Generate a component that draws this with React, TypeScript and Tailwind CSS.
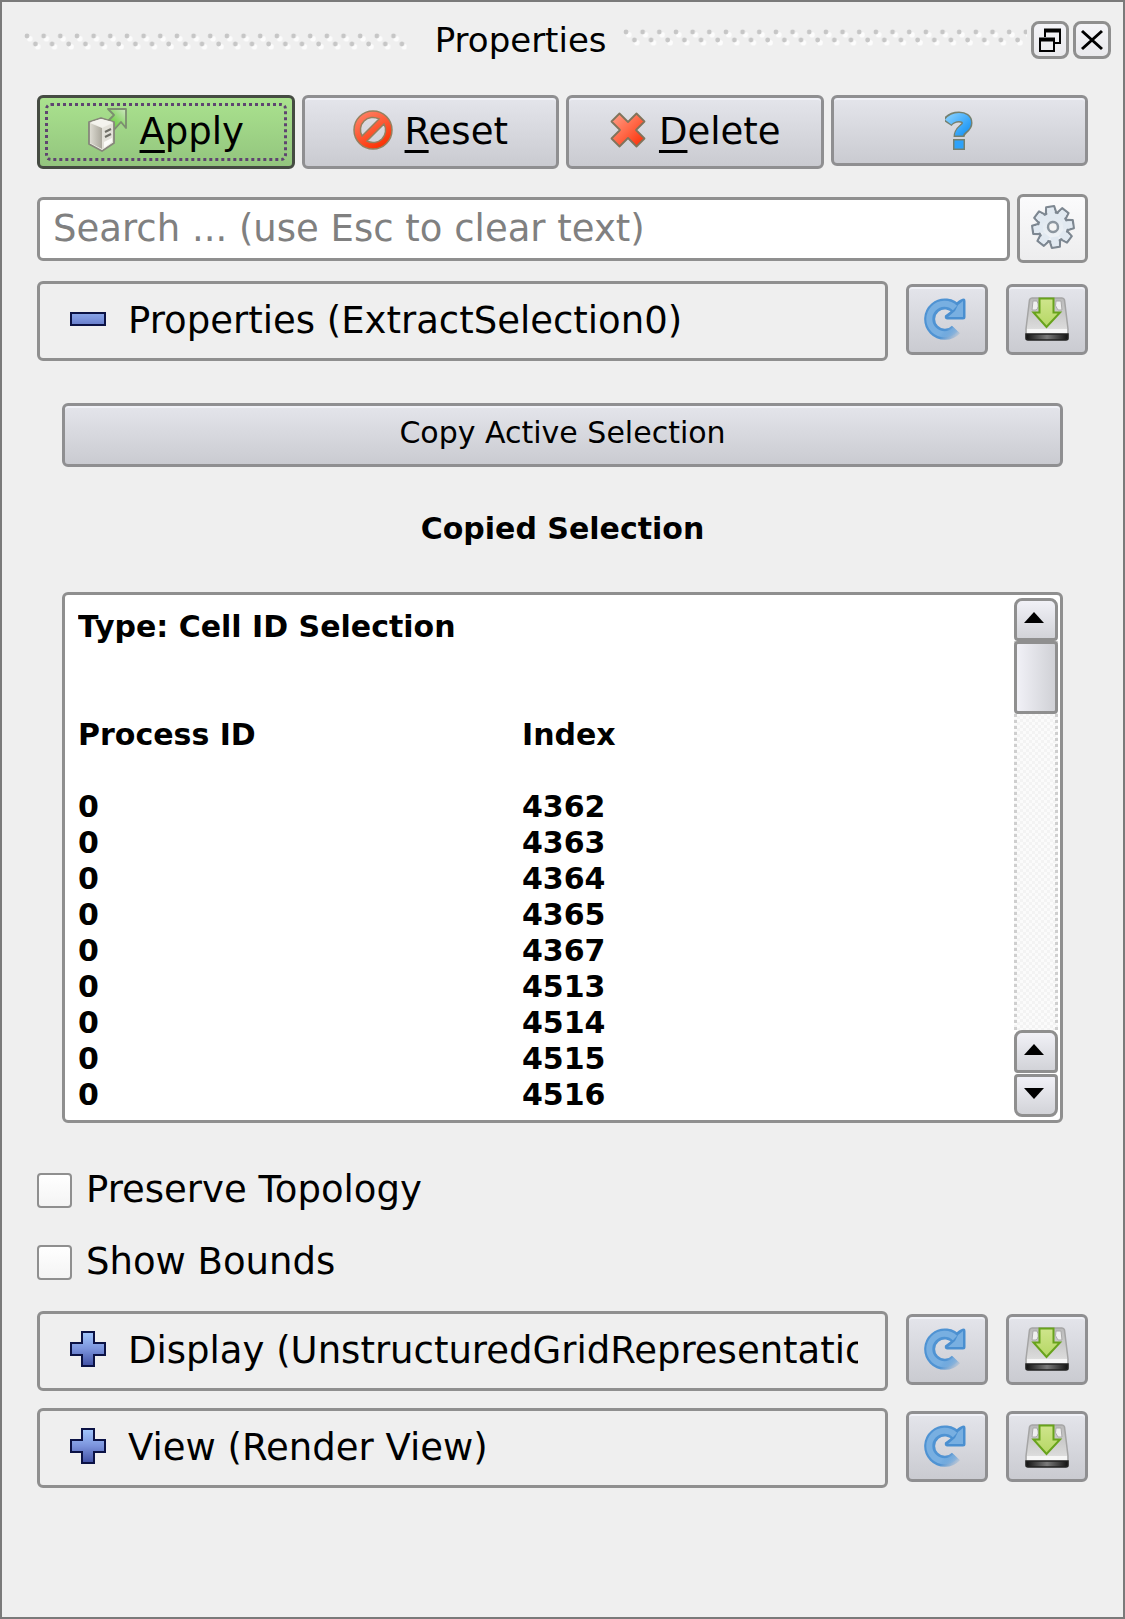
import React from 'react';

const raised =
  'rounded-md border-[3px] border-[#8f8f91] bg-linear-to-b from-[#e4e5eb] to-[#cacbd1] shadow-[inset_0_2px_0_#f0f1f7]';

function Grip({ id }: { id: string }) {
  return (
    <svg className="h-[18px] w-full" aria-hidden="true">
      <defs>
        <pattern id={id} width="16.66" height="18" patternUnits="userSpaceOnUse">
          <circle cx="5.8" cy="5.8" r="2.8" fill="#fcfcfc" />
          <circle cx="13.800" cy="13.800" r="2.8" fill="#fcfcfc" />
          <circle cx="3" cy="3" r="2.4" fill="#c6c6c6" />
          <circle cx="11.4" cy="11" r="2.4" fill="#c6c6c6" />
        </pattern>
      </defs>
      <rect width="100%" height="18" fill={`url(#${id})`} />
    </svg>
  );
}

function ApplyIcon() {
  return (
    <svg className="mb-1 h-[44px] w-[40px]" viewBox="0 0 40 44" aria-hidden="true">
      <defs>
        <linearGradient id="boxSide" x1="0" x2="1">
          <stop offset="0" stopColor="#dddbd2" />
          <stop offset="1" stopColor="#aaa79c" />
        </linearGradient>
        <linearGradient id="arrowFill" x1="1" x2="0" y1="0" y2="1">
          <stop offset="0" stopColor="#cfe6c3" />
          <stop offset=".5" stopColor="#86d463" />
          <stop offset="1" stopColor="#55c42e" />
        </linearGradient>
      </defs>
      <path d="M20 1h18v19l-5-6-8 9-8-7 9-9z" fill="url(#arrowFill)" stroke="#7c8d70" strokeWidth="1.800" strokeLinejoin="round" />
      <path d="M1 14l12-4 13 4v21l-12 8L1 36z" fill="#f1f0ea" stroke="#86867a" strokeWidth="1.8" strokeLinejoin="round" />
      <path d="M2 15l12 5v21L2 35z" fill="url(#boxSide)" />
      <path d="M14 20l11-5v19l-11 8z" fill="#e3e1d9" />
      <path d="M3 14l10-3 12 3-11 5z" fill="#f4f3ee" />
      <path d="M17 24l6-3M17 29l6-3" stroke="#6f6e66" strokeWidth="2" />
      <path d="M16 34l8-4v4l-8 6z" fill="#fbfbf8" />
    </svg>
  );
}

function ResetIcon() {
  return (
    <svg className="mb-1 size-[40px]" viewBox="0 0 40 40" aria-hidden="true">
      <defs>
        <linearGradient id="resetFill" x1="0" x2=".6" y1="0" y2="1">
          <stop offset="0" stopColor="#ff8a70" />
          <stop offset="1" stopColor="#fb3305" />
        </linearGradient>
      </defs>
      <path
        fillRule="evenodd"
        d="M20 1a19 19 0 1 0 0 38a19 19 0 1 0 0-38zM26 9A12.500 12.500 0 0 0 9 26zM31 14A12.500 12.500 0 0 1 14 31z"
        fill="url(#resetFill)"
        stroke="#94805f"
        strokeWidth="1.5"
      />
    </svg>
  );
}

function DeleteIcon() {
  return (
    <svg className="mb-1 size-[38px]" viewBox="0 0 38 38" aria-hidden="true">
      <defs>
        <linearGradient id="deleteFill" x1="0" x2="1" y1="0" y2="1">
          <stop offset="0" stopColor="#ffa08a" />
          <stop offset=".5" stopColor="#ff6847" />
          <stop offset="1" stopColor="#fb2a00" />
        </linearGradient>
      </defs>
      <path
        d="M10.500 2.500l8.500 8.500 8.500-8.500 8 8-8.500 8.500 8.500 8.500-8 8-8.500-8.500-8.500 8.500-8-8 8.500-8.500-8.500-8.500z"
        fill="url(#deleteFill)"
        stroke="#80745c"
        strokeWidth="1.8"
        strokeLinejoin="round"
      />
    </svg>
  );
}

function HelpIcon() {
  return (
    <svg className="h-[40px] w-[28px]" viewBox="0 0 28 40" aria-hidden="true">
      <defs>
        <linearGradient id="helpFill" x1="0" x2="1" y1="0" y2="1">
          <stop offset="0" stopColor="#7ccbff" />
          <stop offset="1" stopColor="#1593f5" />
        </linearGradient>
      </defs>
      <path d="M2 12C5 7.500 9 6 14 6c5 0 8 2 8 6 0 6-8 6-8 14" fill="none" stroke="#75806f" strokeWidth="11" />
      <path d="M8 28h12v11H8z" fill="#75806f" />
      <path d="M3.200 11.200C6 7.500 9 6 14 6c5 0 8 2 8 6 0 6-8 6-8 12.500" fill="none" stroke="url(#helpFill)" strokeWidth="8" />
      <path d="M9.500 29.500h9v8h-9z" fill="#2ea2fa" />
    </svg>
  );
}

const gearTeeth = [0, 45, 90, 135, 180, 225, 270, 315];

function GearIcon() {
  return (
    <svg className="size-[44px]" viewBox="-22 -22 44 44" aria-hidden="true">
      <defs>
        <linearGradient id="gearFill" x1="0" x2="0" y1="-20" y2="20" gradientUnits="userSpaceOnUse">
          <stop offset="0" stopColor="#d8e2ec" />
          <stop offset="1" stopColor="#f6f8fa" />
        </linearGradient>
      </defs>
      <g transform="rotate(-8)">
        {gearTeeth.map((a) => (
          <path
            key={a}
            transform={`rotate(${a})`}
            d="M-5.500-12l1.500-8.500h8l1.500 8.500z"
            fill="#e4ebf2"
            stroke="#7d8791"
            strokeWidth="2.200"
            strokeLinejoin="round"
          />
        ))}
        <circle r="14.500" fill="url(#gearFill)" stroke="#7d8791" strokeWidth="1.500" />
        {gearTeeth.map((a) => (
          <path key={a} transform={`rotate(${a})`} d="M-4.200-10l1-9.300h6.400l1 9.300z" fill="#e1e9f1" />
        ))}
        <circle r="5" fill="#f4f4f4" stroke="#8b959e" strokeWidth="2.500" />
      </g>
    </svg>
  );
}

function RestoreIcon({ id }: { id: string }) {
  return (
    <svg className="mr-1 size-[42px]" viewBox="0 0 42 42" aria-hidden="true">
      <defs>
        <linearGradient id={`${id}-fade`} x1="20" x2="36" y1="22" y2="36" gradientUnits="userSpaceOnUse">
          <stop offset=".4" stopColor="#4f93d3" />
          <stop offset="1" stopColor="#4f93d3" stopOpacity=".15" />
        </linearGradient>
        <linearGradient id={`${id}-light`} x1="20" x2="36" y1="22" y2="36" gradientUnits="userSpaceOnUse">
          <stop offset=".3" stopColor="#78afe1" />
          <stop offset="1" stopColor="#78afe1" stopOpacity=".1" />
        </linearGradient>
      </defs>
      <path d="M33 12A15.200 15.200 0 1 0 32 31.500" fill="none" stroke={`url(#${id}-fade)`} strokeWidth="11" />
      <path
        d="M33 4Q37 .5 40 .5Q41.500 .5 41.500 3V19Q41.500 21.500 39 21.500H23Q20 21 21 17.500L27 13z"
        fill="#4a8fd0"
      />
      <path d="M31 10A15.200 15.200 0 1 0 31.500 31.500" fill="none" stroke={`url(#${id}-light)`} strokeWidth="6" />
      <path d="M34 7L39 3V19H24L31 13z" fill="#78afe1" />
    </svg>
  );
}

function SaveIcon({ id }: { id: string }) {
  return (
    <svg className="h-[44px] w-[44px]" viewBox="0 0 44 44" aria-hidden="true">
      <defs>
        <linearGradient id={`${id}-top`} x1="0" x2="0" y1="0" y2="1">
          <stop offset="0" stopColor="#b9b9b9" />
          <stop offset=".7" stopColor="#d9d9d9" />
          <stop offset="1" stopColor="#f0f0f0" />
        </linearGradient>
        <linearGradient id={`${id}-front`} x1="0" x2="1">
          <stop offset="0" stopColor="#111" />
          <stop offset=".5" stopColor="#7a7a7a" />
          <stop offset="1" stopColor="#111" />
        </linearGradient>
        <linearGradient id={`${id}-arrow`} x1="0" x2="0" y1="0" y2="1">
          <stop offset="0" stopColor="#cfe58c" />
          <stop offset="1" stopColor="#b5d764" />
        </linearGradient>
      </defs>
      <path d="M7 1h30q2 0 2.500 2L43 32v10H1V32L4.500 3Q5 1 7 1z" fill={`url(#${id}-top)`} stroke="#a5a5a5" strokeWidth="1.500" />
      <path d="M8 4h4q3 6-1 9H7zM31 4h5l1 9h-4q-4-4-2-9z" fill="#efefef" stroke="#a9a9a9" />
      <path d="M2 32h40v4H2z" fill="#f6f6f6" />
      <path d="M1 37h42v4q0 2-2 2H3q-2 0-2-2z" fill={`url(#${id}-front)`} stroke="#222" strokeWidth="1.500" />
      <path d="M14.500 1.500h14v14H35L21.500 30 8.500 15.500h6z" fill={`url(#${id}-arrow)`} stroke="#68a31c" strokeWidth="2" />
    </svg>
  );
}

function ExpandIcon({ open, id }: { open: boolean; id: string }) {
  return (
    <svg className="mb-1 size-[36px] shrink-0" viewBox="0 0 36 36" aria-hidden="true">
      <defs>
        <linearGradient id={id} x1="0" x2="0" y1="0" y2="36" gradientUnits="userSpaceOnUse">
          <stop offset="0" stopColor="#a5cbff" />
          <stop offset=".5" stopColor="#7b93dc" />
          <stop offset="1" stopColor="#3c4ba0" />
        </linearGradient>
      </defs>
      <path
        d={open ? 'M1 12h34v12H1z' : 'M12 1h12v11h11v12H24v11H12V24H1V12h11z'}
        fill={`url(#${id})`}
        stroke="#0b1245"
        strokeWidth="2"
      />
    </svg>
  );
}

function Section({ title, open = false, id }: { title: string; open?: boolean; id: string }) {
  return (
    <div className="flex h-20 items-center gap-[18px]">
      <button
        aria-expanded={open}
        className="flex h-20 min-w-0 flex-1 items-center gap-[22px] rounded-md border-[3px] border-[#8f8f8f] pr-[27px] pl-[30px] text-left"
      >
        <ExpandIcon open={open} id={`${id}-expand`} />
        <span className="min-w-0 flex-1 overflow-hidden whitespace-nowrap">{title}</span>
      </button>
      <button aria-label={`Restore defaults: ${title}`} className={`${raised} mb-1 flex h-[71px] w-[82px] items-center justify-center`}>
        <RestoreIcon id={`${id}-restore`} />
      </button>
      <button aria-label={`Save as defaults: ${title}`} className={`${raised} mb-1 flex h-[71px] w-[82px] items-center justify-center`}>
        <SaveIcon id={`${id}-save`} />
      </button>
    </div>
  );
}

function ActionButton({ icon, label, primary = false }: { icon: React.ReactNode; label: string; primary?: boolean }) {
  return (
    <button
      className={
        primary
          ? 'relative flex h-[74px] items-center justify-center gap-3 rounded-md border-[3px] border-[#454b42] bg-linear-to-b from-[#aae28e] to-[#93c57e]'
          : `${raised} flex h-[74px] items-center justify-center gap-3`
      }
    >
      {icon}
      <span>
        <span className="underline decoration-[3px] underline-offset-[6px] [text-decoration-skip-ink:none]">{label[0]}</span>
        {label.slice(1)}
      </span>
      {primary && <span className="pointer-events-none absolute inset-[5px] rounded-md border-[3px] border-dotted border-[#5f4470]" />}
    </button>
  );
}

function Arrow({ down = false }: { down?: boolean }) {
  return (
    <svg className="mr-1 h-[11px] w-[20px]" viewBox="0 0 20 11" aria-hidden="true">
      <path d={down ? 'M0 0h20L10 11z' : 'M0 11h20L10 0z'} fill="#000" />
    </svg>
  );
}

const scrollButton =
  'flex h-[43px] w-full shrink-0 items-center justify-center border-[3px] border-[#8f8f8f] bg-linear-to-b from-[#f1f1f7] to-[#d2d3d8] pb-1';

function ScrollBar() {
  return (
    <div className="flex w-[44px] shrink-0 flex-col">
      <button aria-label="Scroll up" className={`${scrollButton} rounded-t-lg rounded-b-sm`}>
        <Arrow />
      </button>
      <div className="flex-1 border-x-[3px] border-dotted border-[#cfcfcf] bg-[#f7f7f7] bg-[repeating-conic-gradient(#f3f3f3_0_25%,#fbfbfb_0_50%)] bg-[size:6px_6px]">
        <div className="-mx-[3px] h-[73px] rounded-sm border-[3px] border-[#8f8f8f] bg-linear-to-r from-[#f1f1f7] to-[#d0d1d6]" />
      </div>
      <button aria-label="Scroll page up" className={`${scrollButton} rounded-t-lg rounded-b-sm`}>
        <Arrow />
      </button>
      <button aria-label="Scroll down" className={`${scrollButton} mt-px rounded-t-sm rounded-b-lg`}>
        <Arrow down />
      </button>
    </div>
  );
}

function Check({ label }: { label: string }) {
  return (
    <label className="flex h-[72px] items-center gap-[14px]">
      <input
        type="checkbox"
        className="size-[35px] appearance-none rounded border-2 border-[#8f8f8f] bg-linear-to-b from-white to-[#f4f4f4] checked:bg-[#7b93dc]"
      />
      {label}
    </label>
  );
}

const indices = [4362, 4363, 4364, 4365, 4367, 4513, 4514, 4515, 4516];

const floatButton =
  'flex size-[38px] items-center justify-center rounded-lg border-[3px] border-[#8f8f8f] bg-linear-to-b from-[#f4f4f8] to-[#e9e9ec]';

export default function App() {
  return (
    <main className="min-h-screen border-[2px] border-[#7a7a7a] bg-[#efefef] pb-8 font-['DejaVu_Sans',sans-serif] text-[37px] leading-[42px] text-black">
      <header className="flex h-[75px] items-center pr-3 pl-[22px]">
        <div className="mt-1 flex-[84]">
          <div className="pr-7">
            <Grip id="grip-left" />
          </div>
        </div>
        <h1 className="pt-px text-[34px]">Properties</h1>
        <div className="mr-1 mb-1 flex-[86]">
          <div className="pl-4">
            <Grip id="grip-right" />
          </div>
        </div>
        <div className="flex gap-1">
          <button aria-label="Float" className={floatButton}>
            <svg className="size-6" viewBox="0 0 24 24" fill="none" stroke="#000" strokeWidth="2" aria-hidden="true">
              <path d="M7 9V2h15v13h-5" />
              <path d="M6 2.500h17" strokeWidth="4" />
              <path d="M2 11h14v12H2z" />
              <path d="M1 11.500h16" strokeWidth="4" />
            </svg>
          </button>
          <button aria-label="Close" className={floatButton}>
            <svg className="size-6" viewBox="0 0 24 24" fill="none" stroke="#000" strokeWidth="3" aria-hidden="true">
              <path d="M2 3l20 18M22 3L2 21" />
            </svg>
          </button>
        </div>
      </header>

      <div className="px-[35px] pt-[18px]">
        <div className="grid grid-cols-4 gap-[7px]">
          <ActionButton primary icon={<ApplyIcon />} label="Apply" />
          <ActionButton icon={<ResetIcon />} label="Reset" />
          <ActionButton icon={<DeleteIcon />} label="Delete" />
          <button aria-label="Help" className={`${raised} flex h-[71px] items-center justify-center`}>
            <HelpIcon />
          </button>
        </div>

        <div className="mt-[25px] flex items-center gap-[7px]">
          <input
            type="text"
            aria-label="Search properties"
            placeholder="Search ... (use Esc to clear text)"
            className="h-16 min-w-0 flex-1 rounded-md border-[3px] border-[#8f8f8f] bg-white px-[13px] pb-px placeholder:text-[#808080] placeholder:opacity-100"
          />
          <button
            aria-label="Toggle advanced properties"
            className="flex h-[69px] w-[71px] items-center justify-center rounded-md border-[3px] border-[#8f8f8f] bg-linear-to-b from-[#fbfbfc] to-[#ededee] pb-1"
          >
            <GearIcon />
          </button>
        </div>

        <div className="mt-[18px]">
          <Section id="props" title="Properties (ExtractSelection0)" open />
        </div>

        <div className="mt-[42px] px-[25px] text-[30px] leading-9">
          <button className={`${raised} h-16 w-full pb-1`}>Copy Active Selection</button>
          <h2 className="mt-[44px] text-center font-bold">Copied Selection</h2>
          <div className="mt-[45px] flex h-[531px] rounded-md border-[3px] border-[#8f8f8f] bg-white py-[3px] pr-[2px] pl-[13px]">
            <div className="min-w-0 flex-1 overflow-hidden pt-[11px] font-bold">
              <p className="mb-[72px]">Type: Cell ID Selection</p>
              <table className="w-full text-left">
                <thead>
                  <tr>
                    <th className="w-[444px] pb-9">Process ID</th>
                    <th className="pb-9">Index</th>
                  </tr>
                </thead>
                <tbody>
                  {indices.map((n) => (
                    <tr key={n}>
                      <td>0</td>
                      <td>{n}</td>
                    </tr>
                  ))}
                </tbody>
              </table>
            </div>
            <ScrollBar />
          </div>
        </div>

        <div className="mt-[31px]">
          <Check label="Preserve Topology" />
          <Check label="Show Bounds" />
        </div>

        <div className="mt-[13px] flex flex-col gap-[17px]">
          <Section id="display" title="Display (UnstructuredGridRepresentation)" />
          <Section id="view" title="View (Render View)" />
        </div>
      </div>
    </main>
  );
}
